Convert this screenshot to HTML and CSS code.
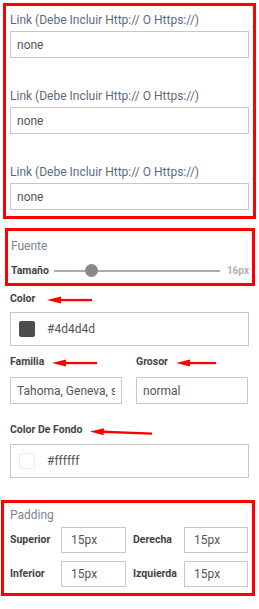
FILE: index.html
```html
<!DOCTYPE html>
<html lang="es">
<head>
  <meta charset="UTF-8" />
  <meta name="viewport" content="width=device-width, initial-scale=1.0" />
  <title>Estilos</title>
  <link rel="stylesheet" href="styles.css">
</head>
<body>
  <div class="box box-links">
    <div class="field">
      <label class="link-label">Link (Debe Incluir Http:// O Https://)</label>
      <input class="text-input" type="text" value="none">
    </div>
    <div class="field">
      <label class="link-label">Link (Debe Incluir Http:// O Https://)</label>
      <input class="text-input" type="text" value="none">
    </div>
    <div class="field">
      <label class="link-label">Link (Debe Incluir Http:// O Https://)</label>
      <input class="text-input" type="text" value="none">
    </div>
  </div>

  <div class="box box-font">
    <div class="box-title">Fuente</div>
    <div class="slider-row">
      <span class="bold-label">Tamaño</span>
      <div class="slider">
        <div class="track fill"></div>
        <div class="thumb"></div>
        <div class="track rest"></div>
      </div>
      <span class="slider-value">16px</span>
    </div>
  </div>

  <div class="plain">
    <div class="label-row row-color">
      <span class="bold-label">Color</span>
      <svg class="arrow" width="45" height="8" viewBox="0 0 45 8"><path d="M0 4 L14 0.6 L14 7.4 Z" /><rect x="12" y="2.9" width="33" height="2.3" /></svg>
    </div>
    <div class="color-input">
      <span class="swatch dark"></span>
      <span>#4d4d4d</span>
    </div>

    <div class="two-col">
      <div>
        <div class="label-row row-family">
          <span class="bold-label">Familia</span>
          <svg class="arrow" width="45" height="8" viewBox="0 0 45 8"><path d="M0 4 L14 0.6 L14 7.4 Z" /><rect x="12" y="2.9" width="33" height="2.3" /></svg>
        </div>
        <input class="text-input short" type="text" value="Tahoma, Geneva, sans-serif">
      </div>
      <div>
        <div class="label-row row-family">
          <span class="bold-label">Grosor</span>
          <svg class="arrow" width="40" height="8" viewBox="0 0 40 8"><path d="M0 4 L14 0.6 L14 7.4 Z" /><rect x="12" y="2.9" width="28" height="2.3" /></svg>
        </div>
        <input class="text-input short" type="text" value="normal">
      </div>
    </div>

    <div class="label-row row-bg">
      <span class="bold-label">Color De Fondo</span>
      <svg class="arrow slant" width="62" height="9" viewBox="0 0 62 9"><path d="M0 3.5 L14 0.3 L13.6 7.2 Z" /><path d="M12 2.6 L62 4.6 L62 6.8 L12 4.9 Z" /></svg>
    </div>
    <div class="color-input">
      <span class="swatch light"></span>
      <span>#ffffff</span>
    </div>
  </div>

  <div class="box box-padding">
    <div class="box-title">Padding</div>
    <div class="padding-grid">
      <span class="bold-label">Superior</span>
      <input class="text-input small" type="text" value="15px">
      <span class="bold-label right">Derecha</span>
      <input class="text-input small" type="text" value="15px">
      <span class="bold-label">Inferior</span>
      <input class="text-input small" type="text" value="15px">
      <span class="bold-label right">Izquierda</span>
      <input class="text-input small" type="text" value="15px">
    </div>
  </div>
</body>
</html>
```

FILE: styles.css
```css
* {
  margin: 0;
  padding: 0;
  box-sizing: border-box;
}

html, body {
  background-color: #ffffff;
  font-family: Roboto, "Open Sans", sans-serif;
  font-size: 12px;
}

body {
  width: 259px;
}

.box {
  border: 3px solid #ff0000;
}

.box-links {
  margin: 3px 3px 0 3px;
  padding: 6px 4px 6px 4px;
}

.field + .field {
  margin-top: 30px;
}

.link-label {
  display: block;
  line-height: 16px;
  color: #5b6b7e;
  margin-bottom: 3px;
}

.text-input {
  display: block;
  width: 100%;
  height: 27px;
  border: 1px solid #c8c8c8;
  background: #ffffff;
  padding: 0 6px;
  font: inherit;
  font-size: 12px;
  color: #555555;
  outline: none;
}

.box-font {
  margin: 9px 4px 0 5px;
  padding: 7px 3px 6px 3px;
}

.box-title {
  line-height: 16px;
  color: #7a8591;
}

.bold-label {
  font-size: 10.5px;
  font-weight: 700;
  color: #444444;
  line-height: 14px;
  white-space: nowrap;
}

.slider-row {
  display: flex;
  align-items: center;
  margin-top: 10px;
  height: 13px;
}

.slider {
  flex: 1;
  display: flex;
  align-items: center;
  margin-left: 5px;
}

.track {
  height: 2px;
  background-color: #aaaaaa;
}

.track.fill {
  width: 31px;
}

.track.rest {
  flex: 1;
}

.thumb {
  width: 13px;
  height: 13px;
  border-radius: 50%;
  background-color: #888888;
}

.slider-value {
  margin-left: 7px;
  font-size: 10px;
  font-weight: 700;
  color: #b0b0b0;
}

.plain {
  padding: 0 10px;
}

.label-row {
  display: flex;
  align-items: center;
  height: 14px;
}

.row-color {
  margin-top: 6px;
  margin-bottom: 6px;
}

.row-family {
  margin-top: 9px;
  margin-bottom: 8px;
}

.row-bg {
  margin-top: 19px;
  margin-bottom: 7px;
}

.arrow {
  fill: #ff0000;
  margin-top: 2px;
}

.row-color .arrow {
  margin-left: 12px;
}

.row-family .arrow {
  margin-left: 8px;
}

.row-bg .arrow {
  margin-left: 8px;
  margin-top: 4px;
}

.color-input {
  display: flex;
  align-items: center;
  height: 34px;
  border: 1px solid #c8c8c8;
  padding-left: 8px;
  color: #555555;
}

.swatch {
  width: 16px;
  height: 16px;
  border-radius: 2px;
  margin-right: 12px;
}

.swatch.dark {
  background-color: #4d4d4d;
}

.swatch.light {
  background-color: #ffffff;
  border: 1px solid #ececec;
}

.two-col {
  display: grid;
  grid-template-columns: 112px 112px;
  column-gap: 14px;
}

.box-padding {
  margin: 22px 4px 0 1px;
  padding: 4px 4px 6px 6px;
}

.padding-grid {
  display: grid;
  grid-template-columns: 51px 65px 58px 64px;
  grid-template-rows: 26px 26px;
  row-gap: 8px;
  align-items: center;
  margin-top: 4px;
}

.text-input.small {
  height: 26px;
  padding: 0 9px;
}

.bold-label.right {
  padding-left: 7px;
}
```
